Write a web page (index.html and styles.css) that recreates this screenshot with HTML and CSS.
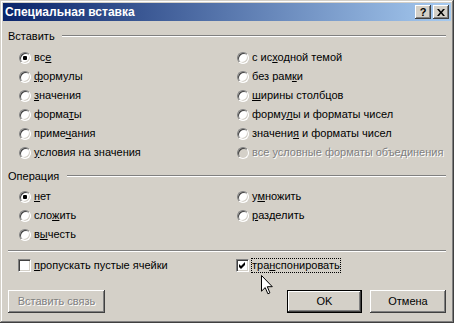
FILE: index.html
```html
<!DOCTYPE html>
<html lang="ru">
<head>
<meta charset="utf-8">
<title>Специальная вставка</title>
<link rel="stylesheet" href="styles.css">
</head>
<body>
<div class="window">
  <div class="titlebar">
    <span class="title">Специальная вставка</span>
    <div class="cap-buttons">
      <div class="cap-btn help">?</div>
      <div class="cap-btn close">
        <svg width="8" height="7" viewBox="0 0 8 7"><path d="M0 0H2L4 2.4L6 0H8L5.1 3.5L8 7H6L4 4.6L2 7H0L2.9 3.5Z" fill="#000"/></svg>
      </div>
    </div>
  </div>
  <div class="client">
    <div class="group-head head-paste"><span class="group-label">Вставить</span><span class="etch"></span></div>
    <div class="options opts-paste">
      <div class="opt"><span class="radio checked"></span><span class="lbl">вс<u>е</u></span></div>
      <div class="opt"><span class="radio"></span><span class="lbl">с ис<u>х</u>одной темой</span></div>
      <div class="opt"><span class="radio"></span><span class="lbl"><u>ф</u>ормулы</span></div>
      <div class="opt"><span class="radio"></span><span class="lbl">без рам<u>к</u>и</span></div>
      <div class="opt"><span class="radio"></span><span class="lbl"><u>з</u>начения</span></div>
      <div class="opt"><span class="radio"></span><span class="lbl"><u>ш</u>ирины столбцов</span></div>
      <div class="opt"><span class="radio"></span><span class="lbl">форма<u>т</u>ы</span></div>
      <div class="opt"><span class="radio"></span><span class="lbl">форму<u>л</u>ы и форматы чисел</span></div>
      <div class="opt"><span class="radio"></span><span class="lbl">приме<u>ч</u>ания</span></div>
      <div class="opt"><span class="radio"></span><span class="lbl">значени<u>я</u> и форматы чисел</span></div>
      <div class="opt"><span class="radio"></span><span class="lbl"><u>у</u>словия на значения</span></div>
      <div class="opt disabled"><span class="radio"></span><span class="lbl">все условные форматы объединения</span></div>
    </div>

    <div class="group-head head-op"><span class="group-label">Операция</span><span class="etch etch-op"></span></div>
    <div class="options opts-op">
      <div class="opt"><span class="radio checked"></span><span class="lbl"><u>н</u>ет</span></div>
      <div class="opt"><span class="radio"></span><span class="lbl">у<u>м</u>ножить</span></div>
      <div class="opt"><span class="radio"></span><span class="lbl">сло<u>ж</u>ить</span></div>
      <div class="opt"><span class="radio"></span><span class="lbl"><u>р</u>азделить</span></div>
      <div class="opt"><span class="radio"></span><span class="lbl">в<u>ы</u>честь</span></div>
    </div>

    <div class="separator"></div>

    <div class="checks">
      <div class="opt"><span class="checkbox"></span><span class="lbl"><u>п</u>ропускать пустые ячейки</span></div>
      <div class="opt"><span class="checkbox checked"><svg width="13" height="13" viewBox="0 0 13 13"><path d="M3 5L5 7L9 3V6L5 10L3 8Z" fill="#000"/></svg></span><span class="lbl focus">тра<u>н</u>спонировать</span></div>
    </div>

    <div class="buttons">
      <div class="btn btn-link disabled">Вставить связь</div>
      <div class="spacer"></div>
      <div class="btn btn-ok default">OK</div>
      <div class="btn btn-cancel">Отмена</div>
    </div>
  </div>
  <svg class="cursor" width="12" height="20" viewBox="0 0 12 20"><path d="M0.5 0.5V16.2L4.2 12.6L6.9 18.8L8.9 17.9L6.3 11.7H11.3Z" fill="#fff" stroke="#000" stroke-width="1" stroke-linejoin="miter"/></svg>
</div>
</body>
</html>
```

FILE: styles.css
```css
html, body {
  margin: 0;
  padding: 0;
  background: #d4d0c8;
}

body {
  font-family: "Liberation Sans", Arial, sans-serif;
  font-size: 11px;
  color: #000;
}

.window {
  position: relative;
  width: 454px;
  height: 323px;
  box-sizing: border-box;
  padding: 3px;
  background: #d4d0c8;
  box-shadow: inset -1px -1px #404040, inset 1px 1px #d4d0c8, inset -2px -2px #808080, inset 2px 2px #fff;
  display: flex;
  flex-direction: column;
}

.titlebar {
  height: 18px;
  display: flex;
  align-items: center;
  padding: 0 2px;
  background: linear-gradient(to right, #0a246a, #a6caf0);
}

.title {
  flex: 1;
  color: #fff;
  font-weight: bold;
  font-size: 12px;
  line-height: 18px;
  white-space: nowrap;
}

.cap-buttons {
  display: flex;
  gap: 2px;
}

.cap-btn {
  width: 16px;
  height: 14px;
  box-sizing: border-box;
  background: #d4d0c8;
  box-shadow: inset -1px -1px #404040, inset 1px 1px #fff, inset -2px -2px #808080, inset 2px 2px #d4d0c8;
  display: flex;
  align-items: center;
  justify-content: center;
}

.cap-btn.help {
  font-weight: bold;
  font-size: 11px;
  line-height: 14px;
}

.cap-btn svg {
  display: block;
}

.client {
  flex: 1;
  padding: 0 5px;
  display: flex;
  flex-direction: column;
}

.group-head {
  display: flex;
  align-items: flex-start;
  line-height: 13px;
}

.head-paste {
  margin-top: 9px;
}

.head-op {
  margin-top: 8px;
}

.etch {
  flex: 1;
  height: 0;
  margin: 5px 0 0 7px;
  border-top: 1px solid #808080;
  border-bottom: 1px solid #fff;
}

.etch-op {
  margin-left: 8px;
}

.options {
  display: grid;
  grid-template-columns: 218px 1fr;
  grid-auto-rows: 19px;
  padding-left: 11px;
}

.opts-paste {
  margin-top: 5px;
}

.opts-op {
  margin-top: 4px;
}

.opt {
  display: flex;
  align-items: center;
  white-space: nowrap;
}

.lbl {
  border: 1px solid transparent;
  line-height: 13px;
}

.lbl u {
  text-underline-offset: 1px;
}

.radio {
  position: relative;
  width: 12px;
  height: 12px;
  box-sizing: border-box;
  margin-right: 2px;
  border-radius: 50%;
  border: 1px solid;
  border-color: #808080 #fff #fff #808080;
  background: #fff;
  box-shadow: inset 1px 1px 0 #404040, inset -1px -1px 0 #d4d0c8;
}

.radio.checked::after {
  content: "";
  position: absolute;
  left: 3px;
  top: 3px;
  width: 4px;
  height: 4px;
  border-radius: 1px;
  background: #000;
}

.disabled .radio {
  background: #d4d0c8;
}

.disabled .lbl,
.btn.disabled {
  color: #808080;
  text-shadow: 1px 1px 0 #fff;
}

.separator {
  margin-top: 6px;
  height: 0;
  border-top: 1px solid #808080;
  border-bottom: 1px solid #fff;
}

.checks {
  margin-top: 4px;
  display: grid;
  grid-template-columns: 218px 1fr;
  grid-auto-rows: 19px;
  padding-left: 10px;
}

.checkbox {
  width: 13px;
  height: 13px;
  box-sizing: border-box;
  margin-right: 2px;
  border: 1px solid;
  border-color: #808080 #fff #fff #808080;
  background: #fff;
  box-shadow: inset 1px 1px 0 #404040, inset -1px -1px 0 #d4d0c8;
  position: relative;
}

.checkbox svg {
  position: absolute;
  left: -1px;
  top: -1px;
}

.lbl.focus {
  border: 1px dotted #000;
}

.buttons {
  margin-top: 15px;
  display: flex;
  gap: 8px;
}

.spacer {
  flex: 1;
}

.btn {
  height: 23px;
  box-sizing: border-box;
  display: flex;
  align-items: center;
  justify-content: center;
  line-height: 13px;
  background: #d4d0c8;
  box-shadow: inset -1px -1px #404040, inset 1px 1px #fff, inset -2px -2px #808080, inset 2px 2px #d4d0c8;
}

.btn-link {
  width: 97px;
}

.btn-ok {
  width: 75px;
}

.btn-cancel {
  width: 76px;
}

.btn.default {
  border: 1px solid #000;
}

.cursor {
  position: absolute;
  left: 261px;
  top: 275px;
}
```
